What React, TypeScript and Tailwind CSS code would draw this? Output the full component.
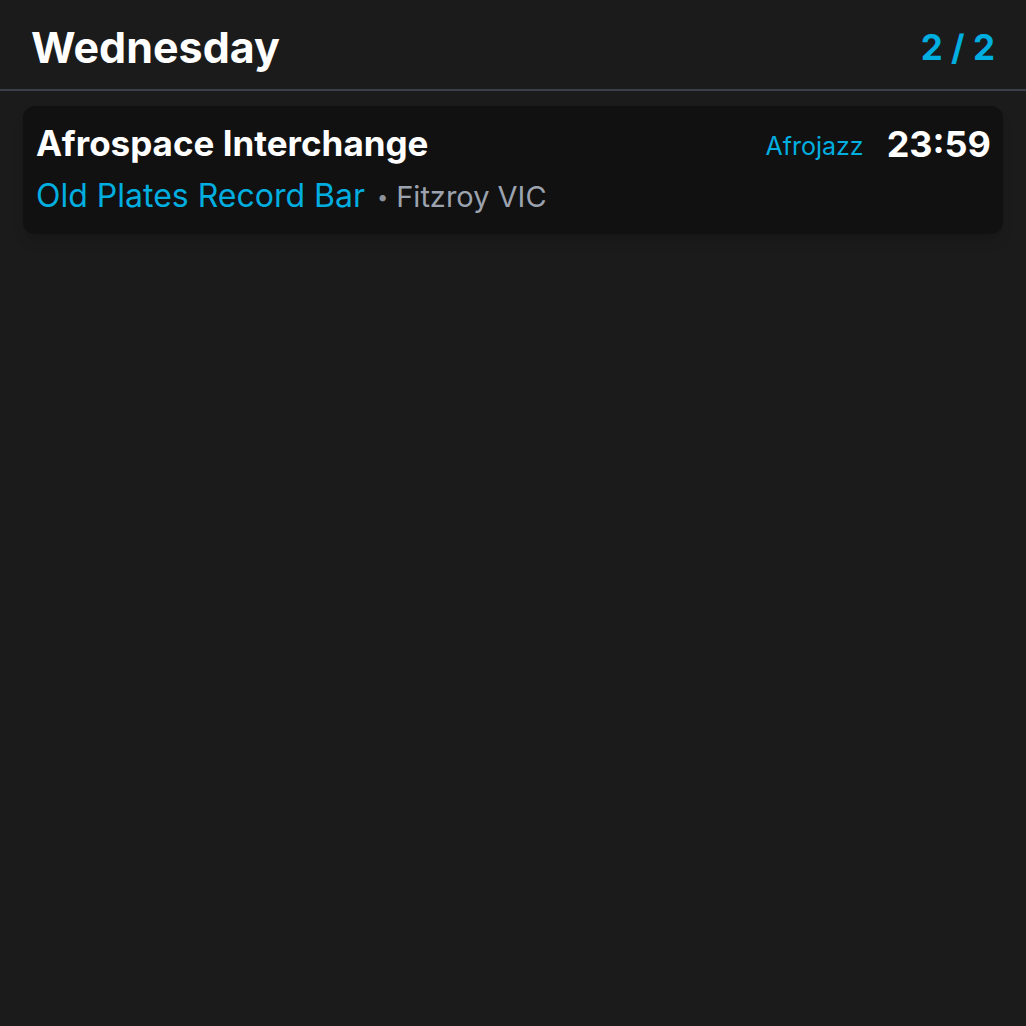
const App = () => {
  return (
    <div className="min-h-[1026px] bg-[#1b1b1b] font-['Inter',sans-serif]">
      <div className="flex items-center justify-between h-[91px] pt-[6px] px-[31px] border-b-2 border-[#3a3f4a]">
        <h1 className="text-[43px] font-bold text-white leading-none">Wednesday</h1>
        <span className="text-[35px] font-bold text-[#00aee0] leading-none">2 / 2</span>
      </div>
      <div className="px-[23px] pt-[15px]">
        <div className="bg-[#111111] rounded-xl px-[13px] pt-[17px] pb-[14px] shadow-lg">
          <div className="flex items-start justify-between">
            <h2 className="text-[35px] font-bold text-white leading-[40px]">
              Afrospace Interchange
            </h2>
            <div className="flex items-baseline gap-[23px] mt-[1px] mr-[-1px]">
              <span className="text-[25px] text-[#00aee0] leading-[40px] relative -top-[2px]">Afrojazz</span>
              <span className="text-[36px] font-bold text-white leading-[40px]">23:59</span>
            </div>
          </div>
          <div className="flex items-baseline mt-[8px] leading-[40px]">
            <span className="text-[32px] text-[#00aee0]">Old Plates Record Bar</span>
            <span className="text-[#8e939c] text-[20px] ml-[12px] mr-[8px] relative -top-[3px]">•</span>
            <span className="text-[29px] text-[#9ca3af]">Fitzroy VIC</span>
          </div>
        </div>
      </div>
    </div>
  );
};

export default App;
